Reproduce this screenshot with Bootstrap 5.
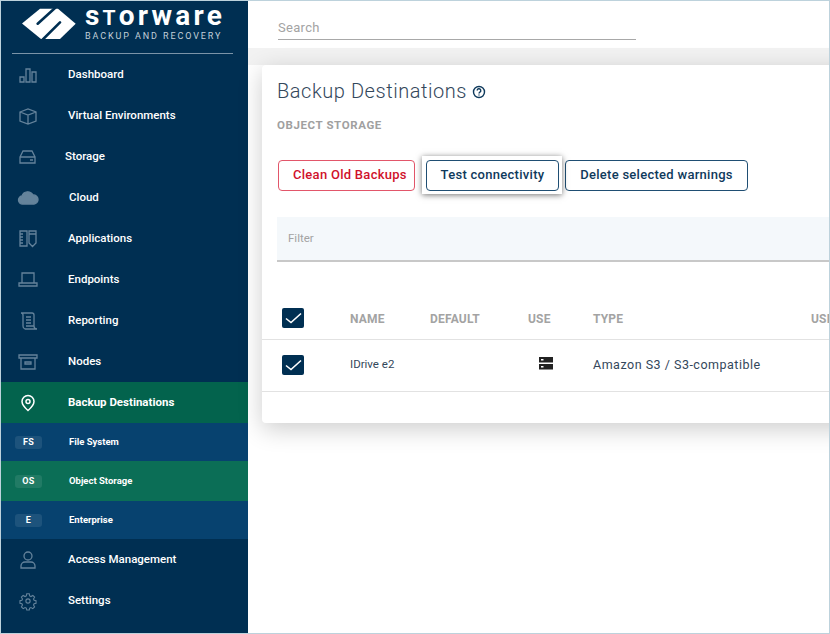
<!DOCTYPE html>
<html lang="en">

<head>
    <meta charset="UTF-8">
    <meta name="viewport" content="width=device-width, initial-scale=1.0">
    <title>Storware - Backup Destinations</title>
    <link href="https://cdn.jsdelivr.net/npm/bootstrap@5.3.0/dist/css/bootstrap.min.css" rel="stylesheet">
    <style>
        html, body { height: 100%; }
        body { font-family: Roboto, "Liberation Sans", sans-serif; overflow: hidden; background: #fff; }
        .app-frame { height: 634px; width: 830px; border: 1px solid #bdd2dc; overflow: hidden; }

        /* sidebar */
        .side-bar { width: 247px; background: #002f52; flex: none; color: #fff; }
        .logo-box { height: 53px; margin: 0 15px 0 11px; border-bottom: 1px solid #7b94a8; padding: 7px 0 0 10px; }
        .logo-text { margin-left: 9px; }
        .logo-name { font-size: 28px; font-weight: 700; letter-spacing: 3.2px; line-height: 17px; margin-top: -1px; white-space: nowrap; }
        .logo-t { font-size: 21px; line-height: 0; }
        .logo-sub { font-size: 9px; letter-spacing: 1.9px; line-height: 11px; color: #c3cfd9; margin-top: 7px; white-space: nowrap; }
        .side-link { height: 41px; font-size: 11.5px; font-weight: 500; color: #fff; padding: 0; }
        .side-link:hover { color: #fff; }
        .side-ico { width: 67px; padding-left: 16px; flex: none; display: flex; }
        .side-ico svg { width: 22px; height: 22px; fill: none; stroke: #64839b; stroke-width: 1.3; }
        .ico-storage { width: 64px; }
        .ico-cloud { width: 68px; }
        .side-on { background: #03634d; font-weight: 700; }
        .side-on .side-ico svg { stroke: #fff; stroke-width: 1.5; }
        .sub-link { background: #07426f; height: 38px; font-size: 9.5px; font-weight: 700; color: #fff; padding: 0; }
        .sub-link:hover { color: #fff; }
        .sub-on { background: #0b6e56; height: 40px; }
        .sub-tag { width: 27px; height: 13px; margin: 0 27px 0 14px; border-radius: 3px; background: rgba(255, 255, 255, .09); font-size: 9px; line-height: 13px; text-align: center; letter-spacing: .3px; }

        /* content */
        .top-strip { height: 47px; background: #fff; padding: 0 0 0 30px; }
        .search-box { width: 358px; height: 39px; border: 0; border-bottom: 1px solid #a8a8a8; border-radius: 0; padding: 14px 0 0; font-size: 13px; color: #777; background: transparent; letter-spacing: .3px; }
        .search-box::placeholder, .filter-box::placeholder { color: #a3a3a3; opacity: 1; }
        .content-bg { background: linear-gradient(#f2f2f2 0, #f2f2f2 17px, #fff 17px); padding: 17px 0 0 14px; flex: 1; min-height: 0; }
        .dest-card { width: 700px; height: 358px; border: 0; border-radius: 4px; box-shadow: 0 6px 24px rgba(0, 0, 0, .2); padding-top: 15px; }
        .page-title { font-size: 20px; font-weight: 300; letter-spacing: .55px; line-height: 22px; color: #33475b; margin: 0 0 0 15px; }
        .help-ico { width: 14px; height: 14px; margin-left: 5px; vertical-align: -1px; }
        .section-name { font-size: 11.5px; font-weight: 700; color: #a0a0a0; margin: 17px 0 0 15px; line-height: 13px; letter-spacing: .6px; }
        .btn-row { margin: 28px 0 0 16px; }
        .btn-plain { height: 31px; font-size: 13px; font-weight: 500; letter-spacing: .28px; padding: 0 0 2px; border-radius: 4px; background: #fff; color: #0f3a5c; border: 1px solid #1f4e73; }
        .btn-plain:hover { background: #fff; color: #0f3a5c; border-color: #1f4e73; }
        .btn-clean { width: 137px; color: #d0112b; border-color: #e2566a; padding-left: 14px; text-align: left; }
        .btn-clean:hover { color: #d0112b; border-color: #e2566a; }
        .focus-wrap { margin: -4px 3px -3px 7px; padding: 4px 3px 3px 4px; background: #fff; box-shadow: 0 1px 6px rgba(0, 0, 0, .55); position: relative; }
        .btn-test { width: 133px; display: block; }
        .btn-del { width: 183px; }
        .filter-box { height: 45px; margin: 26px 0 0 15px; width: 685px; background: #f4f8fb; border: 0; border-bottom: 2px solid #c8c8c8; border-radius: 0; font-size: 11.5px; padding: 0 11px 1px; }
        .dest-table { table-layout: fixed; width: 700px; margin: 35px 0 0; }
        .dest-table th, .dest-table td { border-bottom: 1px solid #e2e2e2; padding: 0; vertical-align: middle; }
        .dest-table th { height: 42px; font-size: 12px; font-weight: 700; color: #a3a3a3; letter-spacing: .2px; padding-top: 2px; }
        .dest-table td { height: 52px; font-size: 12.5px; color: #33475b; }
        .dest-table th .check-box { margin-top: -2px; }
        .check-box { display: block; width: 22px; height: 20px; margin-left: 20px; background: #002f52; border-radius: 2px; }
        .check-box svg { display: block; width: 22px; height: 20px; fill: none; stroke: #fff; stroke-width: 1.6; }
        .name-cell { font-size: 11.5px !important; }
        .type-text { letter-spacing: .5px; }
        .use-ico { display: block; margin: -4px 0 0 11px; }
    </style>
</head>

<body>
    <div class="app-frame d-flex">
        <div class="side-bar d-flex flex-column">
            <div class="logo-box d-flex">
                <svg width="54" height="32" viewBox="0 0 54 32" class="flex-shrink-0">
                    <path fill="#fff" d="M0 15.500 L18 .7 H36 L53.700 15.700 L38 31 H19 Z"/>
                    <path fill="none" stroke="#002f52" stroke-width="2.600" stroke-linecap="round" d="M33 0 L15.700 15.700 M38 14.300 L20.300 32"/>
                </svg>
                <div class="logo-text">
                    <div class="logo-name">s<span class="logo-t">T</span>orware</div>
                    <div class="logo-sub">BACKUP AND RECOVERY</div>
                </div>
            </div>
            <nav class="nav flex-column">
                <a class="nav-link side-link d-flex align-items-center" href="#"><span class="side-ico"><svg viewBox="0 0 22 22"><path d="M3 13h4v5H3zM9 5h4v13H9zM15 8h4v10h-4z"/></svg></span>Dashboard</a>
                <a class="nav-link side-link d-flex align-items-center" href="#"><span class="side-ico"><svg viewBox="0 0 22 22"><path d="M3 7l8-3 8 3v9l-8 3-8-3zM3 7l8 3 8-3M11 10v9"/></svg></span>Virtual Environments</a>
                <a class="nav-link side-link d-flex align-items-center" href="#"><span class="side-ico ico-storage"><svg viewBox="0 0 22 22"><path d="M3 11l3-6h9l3 6v6H3zM3 11h15M13 14h3"/></svg></span>Storage</a>
                <a class="nav-link side-link d-flex align-items-center" href="#"><span class="side-ico ico-cloud"><svg viewBox="0 0 22 22"><path fill="#64839b" d="M6 17a4 4 0 0 1-1-8 6 6 0 0 1 11-1 4.500 4.500 0 0 1 1 9z"/></svg></span>Cloud</a>
                <a class="nav-link side-link d-flex align-items-center" href="#"><span class="side-ico"><svg viewBox="0 0 22 22"><path d="M3 3h7v15H3zM3 6h3M3 9h3M3 12h3M3 15h3M12 3h7v12l-3.500 3.500L12 15zM12 6h7"/></svg></span>Applications</a>
                <a class="nav-link side-link d-flex align-items-center" href="#"><span class="side-ico"><svg viewBox="0 0 22 22"><path d="M5 4h12v10H5zM2 14h18v3H2z"/></svg></span>Endpoints</a>
                <a class="nav-link side-link d-flex align-items-center" href="#"><span class="side-ico"><svg viewBox="0 0 22 22"><path d="M4 3h11a2 2 0 0 1 2 2v11M4 3a2 2 0 0 1 2 2v11a3 3 0 0 0 2 3h12a3 3 0 0 1-3-3H9M9 7h5M9 10h5M9 13h5"/></svg></span>Reporting</a>
                <a class="nav-link side-link d-flex align-items-center" href="#"><span class="side-ico"><svg viewBox="0 0 22 22"><path d="M2 4h18v3H2zM4 7v11h14V7M8 11h6v2H8z"/></svg></span>Nodes</a>
                <a class="nav-link side-link side-on d-flex align-items-center" href="#"><span class="side-ico"><svg viewBox="0 0 22 22"><path d="M11 18.500c-4-3.500-6-6-6-9a6 6 0 0 1 12 0c0 3-2 5.500-6 9z"/><circle cx="11" cy="9.500" r="2"/></svg></span>Backup Destinations</a>
                <a class="nav-link sub-link d-flex align-items-center" href="#"><span class="sub-tag">FS</span>File System</a>
                <a class="nav-link sub-link sub-on d-flex align-items-center" href="#"><span class="sub-tag">OS</span>Object Storage</a>
                <a class="nav-link sub-link d-flex align-items-center" href="#"><span class="sub-tag">E</span>Enterprise</a>
                <a class="nav-link side-link d-flex align-items-center" href="#"><span class="side-ico"><svg viewBox="0 0 22 22"><circle cx="11" cy="7" r="4"/><path d="M4 19v-2a4 4 0 0 1 4-4h6a4 4 0 0 1 4 4v2z"/></svg></span>Access Management</a>
                <a class="nav-link side-link d-flex align-items-center" href="#"><span class="side-ico"><svg viewBox="-2 -2 26 26"><circle cx="11" cy="11" r="2.500"/><path d="M9.500 2.500h3l.5 2.500 1.500.7 2.200-1.300 2.100 2.100-1.300 2.200.7 1.500 2.300.5v3l-2.300.5-.7 1.500 1.300 2.200-2.100 2.100-2.200-1.300-1.500.7-.5 2.300h-3l-.5-2.300-1.500-.7-2.200 1.300-2.100-2.100 1.300-2.200-.7-1.500-2.300-.5v-3l2.300-.5.7-1.500-1.300-2.200 2.100-2.100 2.200 1.300 1.500-.7z"/></svg></span>Settings</a>
            </nav>
        </div>

        <div class="flex-grow-1 d-flex flex-column" style="min-width:0">
            <div class="top-strip">
                <input class="form-control search-box" type="text" placeholder="Search">
            </div>
            <div class="content-bg">
                <div class="card dest-card">
                    <h1 class="page-title">Backup Destinations<svg class="help-ico" viewBox="0 0 14 14" fill="none" stroke="#0f3a5c" stroke-width="1.4"><circle cx="7" cy="7" r="5.500"/><path d="M5.200 5.600a1.800 1.800 0 1 1 2.700 1.500c-.6.400-.9.700-.9 1.300M7 9.600v1"/></svg></h1>
                    <div class="section-name">OBJECT STORAGE</div>
                    <div class="btn-row d-flex">
                        <button class="btn btn-plain btn-clean" type="button">Clean Old Backups</button>
                        <span class="focus-wrap"><button class="btn btn-plain btn-test" type="button">Test connectivity</button></span>
                        <button class="btn btn-plain btn-del" type="button">Delete selected warnings</button>
                    </div>
                    <input class="form-control filter-box" type="text" placeholder="Filter">
                    <table class="dest-table">
                        <colgroup>
                            <col style="width:88px"><col style="width:80px"><col style="width:98px"><col style="width:65px"><col style="width:218px"><col style="width:151px">
                        </colgroup>
                        <thead>
                            <tr>
                                <th><span class="check-box"><svg viewBox="0 0 22 20"><path d="M4 10.500l5 4 10-9"/></svg></span></th>
                                <th>NAME</th>
                                <th>DEFAULT</th>
                                <th>USE</th>
                                <th>TYPE</th>
                                <th>USED</th>
                            </tr>
                        </thead>
                        <tbody>
                            <tr>
                                <td><span class="check-box"><svg viewBox="0 0 22 20"><path d="M4 10.500l5 4 10-9"/></svg></span></td>
                                <td class="name-cell">IDrive e2</td>
                                <td></td>
                                <td>
                                    <svg width="14" height="13" viewBox="0 0 14 13" class="use-ico"><path fill="#222" d="M0 0h14v5.500H0zM0 7h14v5.500H0z"/><path fill="#fff" d="M2 2h2.500v1.500H2zM2 9h2.500v1.500H2z"/></svg>
                                </td>
                                <td class="type-text">Amazon S3 / S3-compatible</td>
                                <td></td>
                            </tr>
                        </tbody>
                    </table>
                </div>
            </div>
        </div>
    </div>

    <script src="https://cdn.jsdelivr.net/npm/bootstrap@5.3.0/dist/js/bootstrap.bundle.min.js"></script>
</body>

</html>
